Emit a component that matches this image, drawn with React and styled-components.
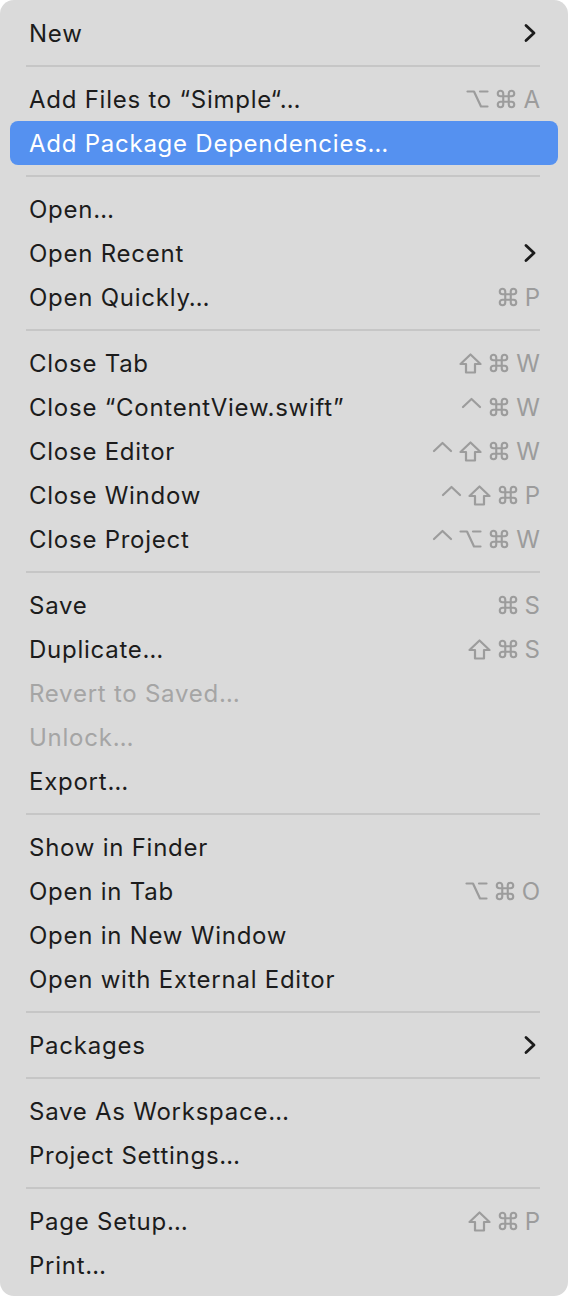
import React, { Fragment } from 'react';
import styled, { createGlobalStyle } from 'styled-components';

const Global = createGlobalStyle`
  html, body {
    margin: 0;
    padding: 0;
    background: #ffffff;
  }
  body {
    font-family: "Inter", "Liberation Sans", sans-serif;
    -webkit-font-smoothing: antialiased;
  }
`;

const Menu = styled.div`
  width: 568px;
  height: 1296px;
  box-sizing: border-box;
  background: #dadada;
  border-radius: 14px;
  padding: 11px 10px 8px;
  display: flex;
  flex-direction: column;
`;

const Row = styled.div`
  height: 44px;
  flex: none;
  display: flex;
  align-items: center;
  justify-content: space-between;
  padding: 0 18px 0 19px;
  border-radius: 8px;
  font-size: 24px;
  letter-spacing: 0.75px;
  color: ${p => (p.$active ? '#ffffff' : p.$disabled ? '#a5a5a5' : '#1c1c1c')};
  background: ${p => (p.$active ? '#5591f0' : 'transparent')};
`;

const Separator = styled.div`
  height: 22px;
  flex: none;
  display: flex;
  align-items: center;
  padding: 0 18px 0 16px;
  &::after {
    content: '';
    flex: 1;
    height: 2px;
    background: #c6c6c6;
  }
`;

const Keys = styled.span`
  display: flex;
  align-items: center;
  gap: 6px;
  color: #9c9c9c;
  font-size: 24px;
  letter-spacing: 0;
  svg {
    display: block;
    flex: none;
  }
`;

const stroke = { fill: 'none', stroke: '#9c9c9c', strokeWidth: 2.2, strokeLinecap: 'round', strokeLinejoin: 'round' };

const KeyIcon = ({ k }) => {
  if (k === 'opt')
    return (
      <svg width="23" height="20" viewBox="0 0 23 20">
        <path d="M1.5 2.5 H8 L15 17.5 H21.5 M14 2.5 H21.5" {...stroke} />
      </svg>
    );
  if (k === 'cmd')
    return (
      <svg width="22" height="22" viewBox="0 0 24 24">
        <path d="M15 6v12a3 3 0 1 0 3-3H6a3 3 0 1 0 3 3V6a3 3 0 1 0-3 3h12a3 3 0 1 0-3-3" {...stroke} strokeWidth="2.3" />
      </svg>
    );
  if (k === 'shift')
    return (
      <svg width="23" height="21" viewBox="0 0 23 21">
        <path d="M11.5 1.5 L21.5 11 H16 V19.5 H7 V11 H1.5 Z" {...stroke} />
      </svg>
    );
  if (k === 'ctrl')
    return (
      <svg width="21" height="20" viewBox="0 0 21 20">
        <path d="M2 10 L10.5 2 L19 10" {...stroke} />
      </svg>
    );
  return <span>{k}</span>;
};

const Chevron = () => (
  <svg width="14" height="20" viewBox="0 0 14 20" style={{ marginRight: 3 }}>
    <path d="M3 2.5 L11 10 L3 17.5" fill="none" stroke="#1c1c1c" strokeWidth="2.8" strokeLinecap="round" strokeLinejoin="round" />
  </svg>
);

const items = [
  { label: 'New', sub: true },
  '-',
  { label: 'Add Files to \u201CSimple\u201C\u2026', keys: ['opt', 'cmd', 'A'] },
  { label: 'Add Package Dependencies\u2026', active: true },
  '-',
  { label: 'Open\u2026' },
  { label: 'Open Recent', sub: true },
  { label: 'Open Quickly\u2026', keys: ['cmd', 'P'] },
  '-',
  { label: 'Close Tab', keys: ['shift', 'cmd', 'W'] },
  { label: 'Close \u201CContentView.swift\u201D', keys: ['ctrl', 'cmd', 'W'] },
  { label: 'Close Editor', keys: ['ctrl', 'shift', 'cmd', 'W'] },
  { label: 'Close Window', keys: ['ctrl', 'shift', 'cmd', 'P'] },
  { label: 'Close Project', keys: ['ctrl', 'opt', 'cmd', 'W'] },
  '-',
  { label: 'Save', keys: ['cmd', 'S'] },
  { label: 'Duplicate\u2026', keys: ['shift', 'cmd', 'S'] },
  { label: 'Revert to Saved\u2026', disabled: true },
  { label: 'Unlock\u2026', disabled: true },
  { label: 'Export\u2026' },
  '-',
  { label: 'Show in Finder' },
  { label: 'Open in Tab', keys: ['opt', 'cmd', 'O'] },
  { label: 'Open in New Window' },
  { label: 'Open with External Editor' },
  '-',
  { label: 'Packages', sub: true },
  '-',
  { label: 'Save As Workspace\u2026' },
  { label: 'Project Settings\u2026' },
  '-',
  { label: 'Page Setup\u2026', keys: ['shift', 'cmd', 'P'] },
  { label: 'Print\u2026' },
];

function App() {
  return (
    <Fragment>
      <Global />
      <Menu>
        {items.map((it, i) =>
          it === '-' ? (
            <Separator key={i} />
          ) : (
            <Row key={i} $active={it.active} $disabled={it.disabled}>
              <span>{it.label}</span>
              {it.sub && <Chevron />}
              {it.keys && (
                <Keys>
                  {it.keys.map((k, j) => <KeyIcon key={j} k={k} />)}
                </Keys>
              )}
            </Row>
          )
        )}
      </Menu>
    </Fragment>
  );
}

export default App;
